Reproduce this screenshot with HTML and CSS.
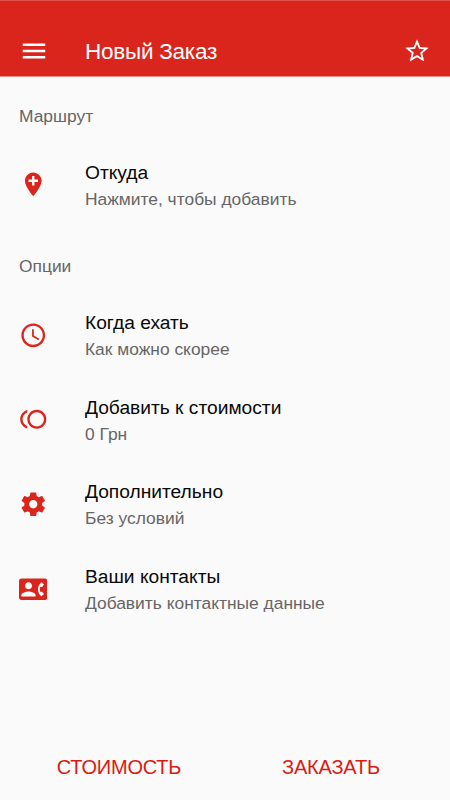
FILE: index.html
```html
<!DOCTYPE html>
<html lang="ru">
<head>
<meta charset="utf-8">
<title>Новый Заказ</title>
<link rel="stylesheet" href="styles.css">
</head>
<body>
<header class="bar">
  <svg class="icon menu" viewBox="0 0 24 24"><path d="M3 18h18v-2H3v2zm0-5h18v-2H3v2zm0-7v2h18V6H3z"/></svg>
  <h1>Новый Заказ</h1>
  <svg class="icon star" viewBox="0 0 24 24"><path d="M22 9.24l-7.19-.62L12 2 9.19 8.63 2 9.24l5.46 4.73L5.82 21 12 17.27 18.18 21l-1.63-7.03L22 9.24zM12 15.4l-3.76 2.27 1-4.28-3.32-2.88 4.38-.38L12 6.1l1.71 4.04 4.38.38-3.32 2.88 1 4.28L12 15.4z"/></svg>
</header>
<main>
  <h2>Маршрут</h2>
  <div class="row route">
    <svg class="icon" viewBox="0 0 24 24"><path d="M12 2C8.14 2 5 5.14 5 9c0 5.25 7 13 7 13s7-7.75 7-13c0-3.86-3.14-7-7-7zm4 8h-3v3h-2v-3H8V8h3V5h2v3h3v2z"/></svg>
    <div><p class="name">Откуда</p><p class="note">Нажмите, чтобы добавить</p></div>
  </div>
  <h2>Опции</h2>
  <div class="row">
    <svg class="icon" viewBox="0 0 24 24"><path d="M11.99 2C6.47 2 2 6.48 2 12s4.47 10 9.99 10C17.52 22 22 17.52 22 12S17.52 2 11.99 2zM12 20c-4.42 0-8-3.58-8-8s3.58-8 8-8 8 3.58 8 8-3.58 8-8 8zm.5-13H11v6l5.25 3.15.75-1.23-4.5-2.67z"/></svg>
    <div><p class="name">Когда ехать</p><p class="note">Как можно скорее</p></div>
  </div>
  <div class="row">
    <svg class="icon" viewBox="0 0 24 24"><path d="M15 4c-4.42 0-8 3.58-8 8s3.58 8 8 8 8-3.58 8-8-3.58-8-8-8zm0 14c-3.31 0-6-2.69-6-6s2.69-6 6-6 6 2.69 6 6-2.69 6-6 6zM3 12c0-2.61 1.67-4.83 4-5.65V4.26C3.55 5.15 1 8.27 1 12s2.55 6.85 6 7.74v-2.09c-2.33-.82-4-3.04-4-5.65z"/></svg>
    <div><p class="name">Добавить к стоимости</p><p class="note">0 Грн</p></div>
  </div>
  <div class="row">
    <svg class="icon" viewBox="0 0 24 24"><path d="M19.43 12.98c.04-.32.07-.64.07-.98s-.03-.66-.07-.98l2.11-1.65c.19-.15.24-.42.12-.64l-2-3.46c-.12-.22-.39-.3-.61-.22l-2.49 1c-.52-.4-1.08-.73-1.69-.98l-.38-2.65C14.46 2.18 14.25 2 14 2h-4c-.25 0-.46.18-.49.42l-.38 2.65c-.61.25-1.17.59-1.69.98l-2.49-1c-.23-.09-.49 0-.61.22l-2 3.46c-.13.22-.07.49.12.64l2.11 1.65c-.04.32-.07.65-.07.98s.03.66.07.98l-2.11 1.65c-.19.15-.24.42-.12.64l2 3.46c.12.22.39.3.61.22l2.49-1c.52.4 1.08.73 1.69.98l.38 2.65c.03.24.24.42.49.42h4c.25 0 .46-.18.49-.42l.38-2.65c.61-.25 1.17-.59 1.69-.98l2.49 1c.23.09.49 0 .61-.22l2-3.46c.12-.22.07-.49-.12-.64l-2.11-1.65zM12 15.5c-1.93 0-3.5-1.57-3.5-3.5s1.57-3.5 3.5-3.5 3.5 1.57 3.5 3.5-1.57 3.5-3.5 3.5z"/></svg>
    <div><p class="name">Дополнительно</p><p class="note">Без условий</p></div>
  </div>
  <div class="row">
    <svg class="icon" viewBox="0 0 24 24"><path d="M22 3H2C.9 3 0 3.9 0 5v14c0 1.1.9 2 2 2h20c1.1 0 1.99-.9 1.99-2L24 5c0-1.1-.9-2-2-2zM8 6c1.66 0 3 1.34 3 3s-1.34 3-3 3-3-1.34-3-3 1.34-3 3-3zm6 12H2v-1c0-2 4-3.1 6-3.1s6 1.1 6 3.1v1zm3.85-4h1.64L21 16l-1.99 1.99c-1.31-.98-2.28-2.38-2.73-3.99-.18-.64-.28-1.31-.28-2s.1-1.36.28-2c.45-1.62 1.42-3.01 2.73-3.99L21 8l-1.51 2h-1.64c-.22.63-.35 1.3-.35 2s.13 1.37.35 2z"/></svg>
    <div><p class="name">Ваши контакты</p><p class="note">Добавить контактные данные</p></div>
  </div>
</main>
<footer><button>СТОИМОСТЬ</button><button>ЗАКАЗАТЬ</button></footer>
</body>
</html>
```

FILE: styles.css
```css
* { box-sizing: border-box; margin: 0; padding: 0; }
body { width: 450px; height: 800px; display: flex; flex-direction: column; overflow: hidden; background: #fafafa; color: #212121; font-family: "Liberation Sans", Arial, sans-serif; }
.bar { height: 77px; padding: 25px 19.5px 0 18.5px; display: flex; align-items: center; background: #da251c; color: #fff; border-top: 1px solid #e0544d; border-bottom: 1px solid #ee8d88; }
.icon { display: block; width: 28.5px; height: 28.5px; fill: currentColor; flex: none; }
.menu { width: 30px; height: 30px; }
.star { width: 28px; height: 28px; }
h1 { flex: 1; margin-left: 36.5px; padding-top: 2px; font-size: 22.5px; font-weight: 400; letter-spacing: -0.25px; }
main { flex: 1; }
h2 { height: 65px; padding: 29px 19px 0; font-size: 17.4px; line-height: 20px; font-weight: 400; color: #666; }
.row { height: 84.7px; padding: 18px 18.7px 0; display: grid; grid-template-columns: 66.3px 1fr; align-items: start; color: #da251c; }
.route { height: 85px; }
.row .icon { margin-top: 10.8px; }
.route .icon { margin-top: 10px; }
.name { font-size: 19.2px; line-height: 26px; color: #080808; }
.note { font-size: 17.4px; line-height: 26.6px; color: #666; }
footer { height: 66px; padding: 0 13px; display: grid; grid-template-columns: 1fr 1fr; }
button { border: 0; background: none; color: #da1a12; font: 20px "Liberation Sans", Arial, sans-serif; letter-spacing: -0.2px; }
```
